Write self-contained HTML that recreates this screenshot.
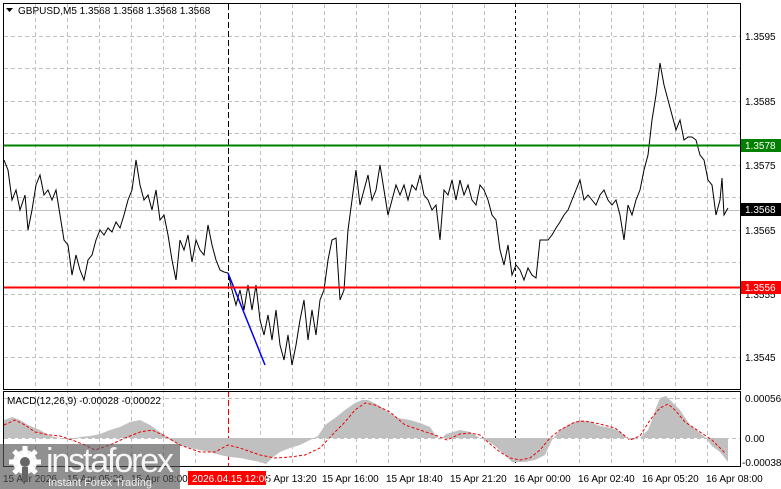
<!DOCTYPE html>
<html><head><meta charset="utf-8"><style>
html,body{margin:0;padding:0;background:#fff;width:781px;height:489px;overflow:hidden}
svg{display:block;font-family:"Liberation Sans",Tahoma,sans-serif}
</style></head><body>
<svg width="781" height="489" viewBox="0 0 781 489" xmlns="http://www.w3.org/2000/svg">
<rect width="781" height="489" fill="#fff"/>
<g stroke="#c0c0c0" stroke-width="1" stroke-dasharray="4,3">
<line x1="4" y1="36.5" x2="740" y2="36.5"/><line x1="4" y1="68.5" x2="740" y2="68.5"/>
<line x1="4" y1="101.5" x2="740" y2="101.5"/><line x1="4" y1="133.5" x2="740" y2="133.5"/>
<line x1="4" y1="165.5" x2="740" y2="165.5"/><line x1="4" y1="197.5" x2="740" y2="197.5"/>
<line x1="4" y1="230.5" x2="740" y2="230.5"/><line x1="4" y1="262.5" x2="740" y2="262.5"/>
<line x1="4" y1="294.5" x2="740" y2="294.5"/><line x1="4" y1="326.5" x2="740" y2="326.5"/>
<line x1="4" y1="357.5" x2="740" y2="357.5"/>
<line x1="4" y1="398.5" x2="740" y2="398.5"/><line x1="4" y1="438.5" x2="740" y2="438.5"/>
</g>
<g stroke="#c0c0c0" stroke-width="1" stroke-dasharray="4,3">
<path d="M35.5 4V466M67.5 4V466M99.5 4V466M131.5 4V466M163.5 4V466M195.5 4V466M260.5 4V466M292.5 4V466M324.5 4V466M356.5 4V466M388.5 4V466M420.5 4V466M452.5 4V466M484.5 4V466M547.5 4V466M579.5 4V466M611.5 4V466M643.5 4V466M675.5 4V466M707.5 4V466"/>
</g>
<line x1="228.5" y1="4" x2="228.5" y2="389" stroke="#000" stroke-dasharray="6,3"/>
<line x1="228.5" y1="391" x2="228.5" y2="466" stroke="#e00" stroke-dasharray="6,3"/>
<line x1="515.5" y1="4" x2="515.5" y2="466" stroke="#000" stroke-dasharray="3,3"/>
<line x1="4" y1="210.5" x2="740" y2="210.5" stroke="#c0c0c0"/>
<!-- MACD histogram -->
<polygon fill="#c0c0c0" points="4,438 4,420 12,417 20,420 28,425 40,430 50,436 60,438 70,440 80,437 90,436 100,434 110,430 120,427 130,422 140,420 150,425 160,432 170,440 180,445 190,448 200,450 210,452 220,455 230,457 240,458 250,460 260,462 266,464 272,458 280,452 290,448 300,445 310,440 318,436 325,425 335,418 345,410 355,403 362,400 368,400 378,405 388,412 398,418 410,420 420,423 430,427 436,436 440,440 446,434 460,430 470,432 480,438 486,440 495,446 505,455 512,462 525,462 535,460 545,455 552,440 560,430 570,424 580,420 590,422 600,426 612,428 620,432 625,436 630,440 640,438 648,430 652,420 656,408 660,398 666,396 672,402 680,410 690,425 700,433 706,438 712,446 720,452 728,462 728,438"/>
<polyline fill="none" stroke="#e00" stroke-width="1" stroke-dasharray="3,2" points="4,425 15,420 25,425 35,432 50,435 60,436 72,440 85,445 95,450 110,445 125,438 140,432 152,430 165,436 180,445 200,452 215,452 228,445 240,448 260,455 275,458 290,457 305,455 320,448 335,432 345,422 355,410 365,403 375,405 390,412 405,425 420,430 435,435 447,440 460,434 470,433 480,435 490,444 500,452 510,458 520,460 530,458 540,450 550,438 560,430 575,422 585,421 600,424 615,428 630,440 640,436 650,420 660,408 668,404 675,410 685,422 700,432 712,440 725,453"/>
<line x1="4" y1="438.5" x2="740" y2="438.5" stroke="#c0c0c0" stroke-dasharray="4,3"/>
<!-- price -->
<polyline fill="none" stroke="#000" stroke-width="1" points="4,160 8,170 12,200 16,190 20,210 25,195 28,230 32,210 36,185 40,175 44,195 48,190 52,200 56,190 60,215 64,240 68,245 72,275 76,255 80,270 84,280 88,260 92,255 96,240 100,230 104,235 108,228 112,232 116,222 120,228 124,215 128,200 132,190 136,160 140,185 144,200 148,195 152,210 156,190 160,220 164,215 168,235 172,260 176,280 180,240 184,250 188,235 192,262 196,240 200,250 204,255 208,225 212,245 216,260 220,270 224,272 228,273 232,290 236,305 240,290 244,310 248,285 252,310 256,285 260,320 264,335 268,315 272,340 276,310 280,345 284,360 288,335 292,365 296,345 300,320 304,300 308,340 312,310 316,335 320,300 324,290 328,260 332,240 336,238 340,300 344,290 348,230 352,200 356,170 360,205 364,190 368,175 372,200 376,190 380,165 384,190 388,215 392,200 396,185 400,195 404,185 408,200 412,185 416,190 420,175 424,195 428,200 432,210 436,205 440,240 444,190 448,195 452,180 456,200 460,180 464,195 468,185 472,200 476,205 480,185 484,190 488,200 492,215 496,220 500,250 504,265 508,245 512,275 516,265 520,270 524,280 528,268 532,275 536,278 540,240 544,240 548,240 552,235 556,228 560,222 564,215 568,210 572,200 576,190 580,180 584,200 588,195 592,200 596,205 600,195 604,190 608,200 612,205 616,200 620,215 624,240 628,205 632,215 636,200 640,190 644,170 648,155 652,120 656,95 660,63 664,85 668,100 672,115 676,130 680,120 684,140 688,137 692,137 696,140 700,155 704,160 708,180 712,185 716,215 720,200 722,178 724,215 728,208"/>
<line x1="228" y1="273" x2="265" y2="365" stroke="#00f" stroke-width="1.5"/>
<line x1="4" y1="145.5" x2="740" y2="145.5" stroke="#008000" stroke-width="2"/>
<line x1="4" y1="287.5" x2="740" y2="287.5" stroke="#f00" stroke-width="2"/>
<!-- borders -->
<rect x="3.5" y="3.5" width="737" height="386" fill="none" stroke="#000"/>
<rect x="3.5" y="391.5" width="737" height="75" fill="none" stroke="#000"/>
<!-- right axis -->
<g font-size="10" fill="#000">
<text x="745" y="40">1.3595</text><text x="745" y="105">1.3585</text>
<text x="745" y="169">1.3575</text><text x="745" y="234">1.3565</text>
<text x="745" y="298">1.3555</text><text x="745" y="361">1.3545</text>
<text x="745" y="402">0.00056</text><text x="745" y="442">0.00</text><text x="742" y="466">-0.00038</text>
</g>
<rect x="741" y="139" width="40" height="13" fill="#008000"/><text x="745" y="149" font-size="10" fill="#fff">1.3578</text>
<rect x="741" y="203" width="40" height="13" fill="#000"/><text x="745" y="213" font-size="10" fill="#fff">1.3568</text>
<rect x="741" y="281" width="40" height="13" fill="#f00"/><text x="745" y="291" font-size="10" fill="#fff">1.3556</text>
<!-- header -->
<path d="M6 8h7l-3.5 4z" fill="#000"/>
<text x="18" y="14" font-size="10" fill="#000">GBPUSD,M5  1.3568 1.3568 1.3568 1.3568</text>
<text x="7" y="404" font-size="10" fill="#000">MACD(12,26,9) -0.00028 -0.00022</text>
<!-- time axis -->
<g font-size="10" fill="#000">
<text x="3" y="482">15 Apr 2026</text><text x="67" y="482">15 Apr 05:20</text>
<text x="131" y="482">15 Apr 08:00</text><text x="260" y="482">15 Apr 13:20</text>
<text x="322" y="482">15 Apr 16:00</text><text x="386" y="482">15 Apr 18:40</text>
<text x="450" y="482">15 Apr 21:20</text><text x="514" y="482">16 Apr 00:00</text>
<text x="578" y="482">16 Apr 02:40</text><text x="642" y="482">16 Apr 05:20</text>
<text x="706" y="482">16 Apr 08:00</text>
</g>
<rect x="188" y="471" width="78" height="14" fill="#f00"/>
<text x="192" y="482" font-size="10" fill="#fff">2026.04.15 12:00</text>
<!-- watermark -->
<rect x="0" y="444" width="180" height="45" fill="#555" fill-opacity="0.65"/>
<g fill="#fff" fill-opacity="0.9">
<circle cx="25" cy="462" r="12"/>
<g stroke="#fff" stroke-width="5"><path d="M25 446v32M9 462h32M14 451l22 22M36 451l-22 22"/></g>
</g>
<circle cx="25" cy="462" r="5" fill="#666"/>
<rect x="22" y="467" width="6" height="14" fill="#666"/>
<text x="46" y="472" font-size="34" fill="#fff" fill-opacity="0.92" textLength="128">instaforex</text>
<text x="48" y="486" font-size="11" fill="#fff" fill-opacity="0.85">Instant Forex Trading</text>
</svg>
</body></html>
